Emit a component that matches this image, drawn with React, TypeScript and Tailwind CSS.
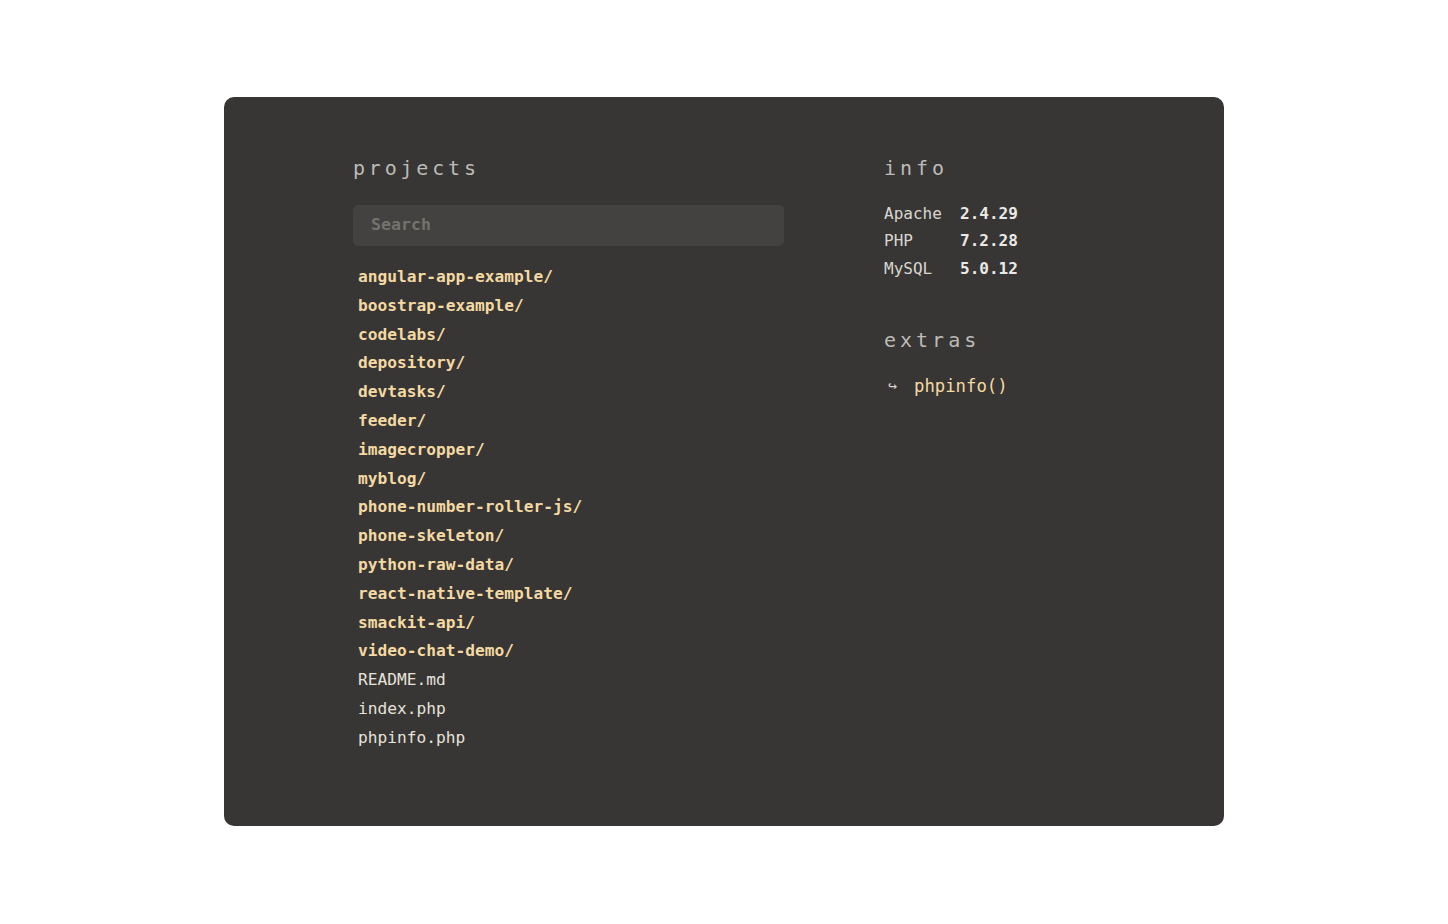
import React from "react";

const dirs = [
  "angular-app-example/",
  "boostrap-example/",
  "codelabs/",
  "depository/",
  "devtasks/",
  "feeder/",
  "imagecropper/",
  "myblog/",
  "phone-number-roller-js/",
  "phone-skeleton/",
  "python-raw-data/",
  "react-native-template/",
  "smackit-api/",
  "video-chat-demo/",
];
const files = ["README.md", "index.php", "phpinfo.php"];
const info: [string, string][] = [
  ["Apache", "2.4.29"],
  ["PHP", "7.2.28"],
  ["MySQL", "5.0.12"],
];

export default function App() {
  return (
    <div
      className="w-[1448px] h-[924px] bg-white pt-[97px] pl-[224px]"
      style={{ fontFamily: '"DejaVu Sans Mono", "Liberation Mono", monospace' }}
    >
      <div className="w-[1000px] h-[729px] rounded-[10px] bg-[#373634] pt-[56px] pl-[129px] flex">
        <div className="w-[431px]">
          <h2 className="text-[20px] leading-[30px] tracking-[0.19em] text-[#bdbbb7]">projects</h2>
          <div className="mt-[22px] h-[41px] rounded-[5px] bg-[#434240] flex items-center pl-[18px]">
            <span className="text-[16.6px] font-bold text-[#74726f]">Search</span>
          </div>
          <ul className="mt-[17px] pl-[5px] text-[16.2px] leading-[28.8px]">
            {dirs.map((d) => (
              <li key={d} className="font-bold text-[#f4d9a3]">{d}</li>
            ))}
            {files.map((f) => (
              <li key={f} className="text-[#e6e2da]">{f}</li>
            ))}
          </ul>
        </div>
        <div className="ml-[100px]">
          <h2 className="text-[20px] leading-[30px] tracking-[0.2em] text-[#bdbbb7]">info</h2>
          <div className="mt-[16.5px] text-[16px] leading-[27.5px]">
            {info.map(([k, v]) => (
              <div key={k} className="flex">
                <span className="w-[76px] text-[#d9d6d1]">{k}</span>
                <span className="font-bold text-[#ebe9e5]">{v}</span>
              </div>
            ))}
          </div>
          <h2 className="mt-[42.5px] text-[20px] leading-[30px] tracking-[0.2em] text-[#bdbbb7]">extras</h2>
          <div className="mt-[17px] flex items-center leading-[28px]">
            <span className="w-[30px] pl-[4px] text-[15px] text-[#d9d6d1]">↪</span>
            <span className="text-[17.3px] text-[#f4d9a3]">phpinfo()</span>
          </div>
        </div>
      </div>
    </div>
  );
}
